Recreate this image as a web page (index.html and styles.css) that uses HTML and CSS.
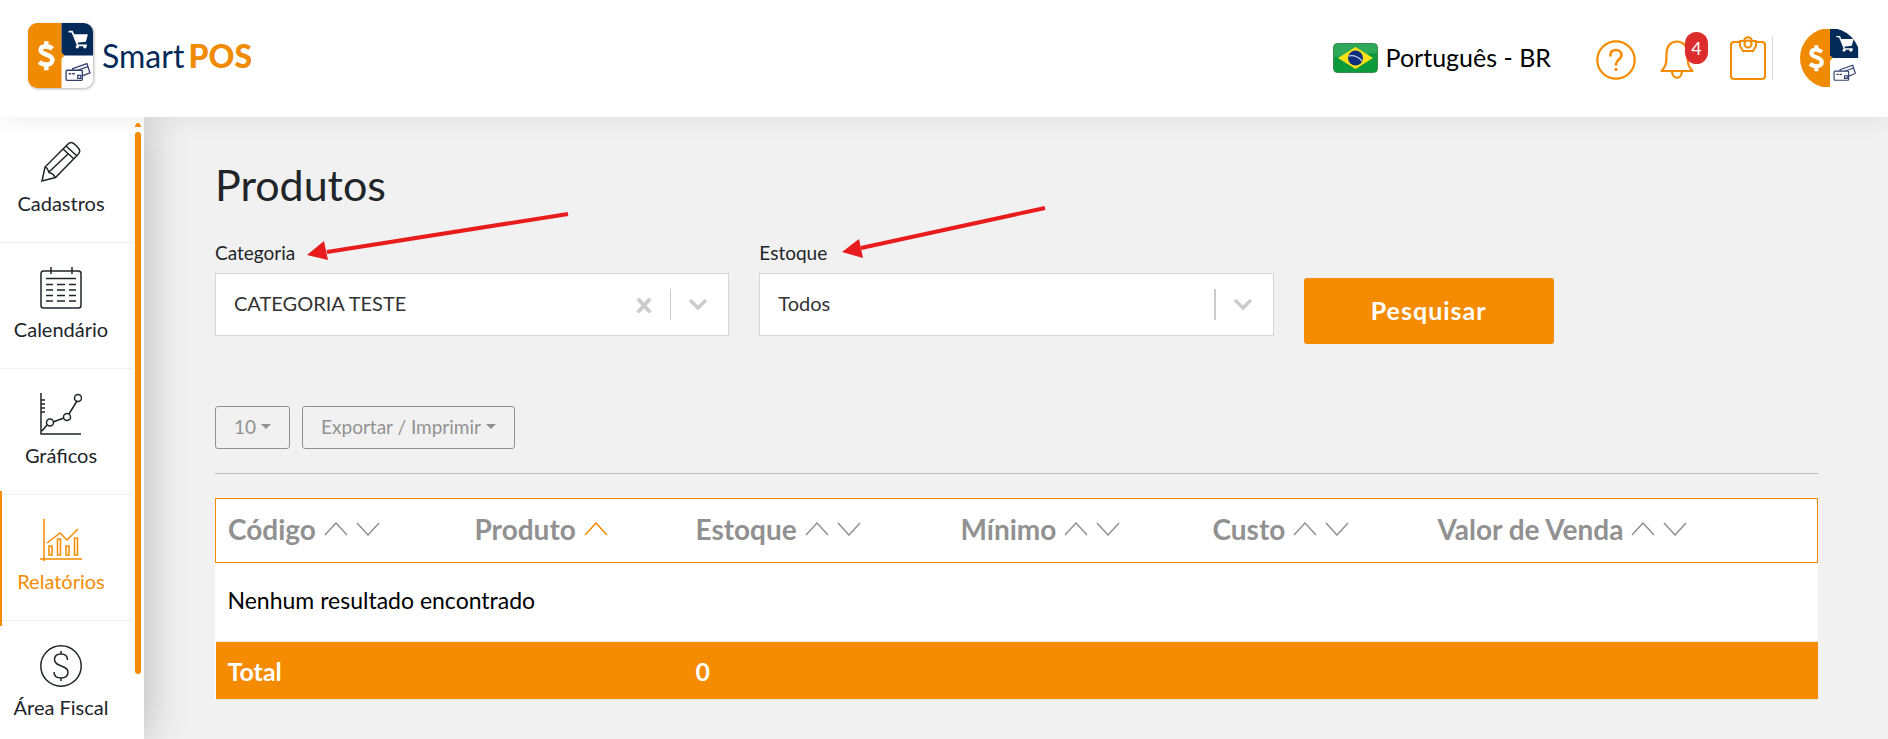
FILE: index.html
```html
<!DOCTYPE html>
<html lang="pt-BR">
<head>
<meta charset="utf-8">
<meta name="viewport" content="width=device-width, initial-scale=1">
<title>Smart POS - Produtos</title>
<link rel="stylesheet" href="styles.css">
</head>
<body>
<svg class="defs" width="0" height="0" aria-hidden="true">
  <symbol id="emblem" viewBox="0 0 64 64" overflow="visible">
    <rect width="64" height="64" fill="#fff"/>
    <path d="M0 0h33v29l3 3-3 3v29H0z" fill="#f08a00"/>
    <path d="M33 0h31v32H36l-3-3z" fill="#042a59"/>
    <path d="M24 25.500c-2-2-4-2.500-6.500-2.500-3.500 0-5 1.500-5 3.700 0 5.300 11.500 3.300 11.500 9.800 0 3-2.500 4.500-6 4.500-3 0-5-.8-7-2.500M18 18v5M18 41v5.500" fill="none" stroke="#fff" stroke-width="4.500"/>
    <path d="M40 8.500h3.500L49 22h9" fill="none" stroke="#fff" stroke-width="1.600"/>
    <path d="M45 11h14l-2 7.500-9 1z" fill="#fff"/>
    <circle cx="48.500" cy="23.500" r="1.600" fill="#fff"/><circle cx="56" cy="23.500" r="1.600" fill="#fff"/>
    <g fill="#fff" stroke="#33406e" stroke-width="1.300">
      <path d="M44 45l14-5 3 9-15 6z"/><path d="M45 48l14-5" fill="none"/>
      <rect x="37.500" y="46.500" width="16" height="10" rx="1"/><path d="M40 50h2.500M43.500 50h2.500M49 51.500h3v3h-3z" fill="none"/>
    </g>
  </symbol>
  <symbol id="up" viewBox="0 0 24 14"><path d="M1 13L12 1l11 12" fill="none" stroke="currentColor" stroke-width="1.500"/></symbol>
  <symbol id="down" viewBox="0 0 24 14"><path d="M1 1l11 12L23 1" fill="none" stroke="currentColor" stroke-width="1.500"/></symbol>
  <symbol id="chevron" viewBox="0 0 18 12"><path d="M2 2l7 7 7-7" fill="none" stroke="currentColor" stroke-width="3.500" stroke-linecap="round"/></symbol>
</svg>

<header class="topbar">
  <a class="brand" href="#">
    <svg class="brand-mark" viewBox="0 0 64 64" aria-hidden="true"><use href="#emblem" width="64" height="64"/></svg>
    <span class="brand-name">Smart <b>POS</b></span>
  </a>
  <div class="tools">
    <button class="language" type="button">
      <svg width="45" height="30" viewBox="0 0 45 30" aria-hidden="true">
        <rect x=".5" y=".5" width="44" height="29" rx="4" fill="#0a9a3c" stroke="#3c8a4c"/>
        <path d="M1 14V5a4 4 0 0 1 4-4h35a4 4 0 0 1 4 4v5z" fill="#fff" opacity=".15"/>
        <path d="M22.500 4L40 15 22.500 26 5 15z" fill="#fbe116"/>
        <circle cx="22.500" cy="15" r="7.500" fill="#0d2f7e"/>
        <path d="M15.500 13c5-1 10 1 13.500 5" fill="none" stroke="#c8d4e8" stroke-width="1.200"/>
      </svg>
      <span>Português - BR</span>
    </button>
    <button class="tool" type="button" aria-label="Ajuda">
      <svg width="40" height="40" viewBox="0 0 40 40" fill="none" stroke="currentColor" stroke-width="2.200"><circle cx="20" cy="20" r="18.700"/><path d="M14.500 16.500v-1.500c0-3.500 2.400-5 5.500-5s5.500 2 5.500 5c0 4.500-5.500 4.500-5.500 9.500v1M20 28v3" stroke-width="2.600"/></svg>
    </button>
    <button class="tool bell" type="button" aria-label="Notificações">
      <svg width="34" height="40" viewBox="0 0 34 40" fill="none" stroke="currentColor" stroke-width="2.200" stroke-linejoin="round"><path d="M1.500 31c4-4 5-7 5-17C6.500 6 11 1.500 17 1.500S27.500 6 27.500 14c0 10 1 13 5 17zM12 31c0 9 10 9 10 0"/></svg>
      <span class="badge">4</span>
    </button>
    <button class="tool clipboard" type="button" aria-label="Tarefas">
      <svg width="36" height="44" viewBox="0 0 36 44" fill="none" stroke="currentColor" stroke-width="2"><path d="M10 6H4a3 3 0 0 0-3 3v31a3 3 0 0 0 3 3h28a3 3 0 0 0 3-3V9a3 3 0 0 0-3-3h-6"/><path d="M10 5h4c1-5 7-5 8 0h4v5l-3 5H13l-3-5z"/><circle cx="18" cy="8" r="3.500"/></svg>
    </button>
    <button class="avatar" type="button" aria-label="Conta"><svg viewBox="0 -1 66 66" aria-hidden="true"><use href="#emblem" width="64" height="64"/></svg></button>
  </div>
</header>

<div class="shell">
  <nav class="sidebar" aria-label="Menu principal">
    <ul class="menu">
      <li><a href="#"><svg class="menu-icon" viewBox="0 0 42 42"><path d="M2 40l3-14L27.500 3.500c3-3 5-2.500 8 .5l2 2c3 3 3 5 0 8L15.500 36.500zM5 26c4 1 2.500 4 4 5.500 2 1 4 0 6 5M9 31l19-18M23 8l11 10M26 5l11 10"/></svg>Cadastros</a></li>
      <li><a href="#"><svg class="menu-icon" viewBox="0 0 42 42"><rect x="1" y="4" width="40" height="37" rx="2.500"/><path d="M11 0v7M32 0v7M6 11.500h30"/><path d="M6 17.500h7m4 0h8m4 0h7M6 23h7m4 0h8m4 0h7M6 28.500h7m4 0h8m4 0h7M6 34h7m4 0h8m4 0h7"/></svg>Calendário</a></li>
      <li><a href="#"><svg class="menu-icon" viewBox="0 0 42 42"><path d="M1 0v41h40M1 7h4M1 11h4M1 15h4M1 19h4M2 38l5-6M13 29l11-4M29 21l8-13"/><circle cx="10" cy="29.500" r="3.500"/><circle cx="27" cy="24" r="3.500"/><circle cx="38" cy="5" r="3.500"/></svg>Gráficos</a></li>
      <li class="active"><a href="#"><svg class="menu-icon" viewBox="0 0 42 42"><path d="M4 0v42M0 40h42M7 24l13-10 7 7 11-11M9 27h3v9H9zM17.500 20h3v16h-3zM26 27h3v9h-3zM34.500 19h3v17h-3z"/></svg>Relatórios</a></li>
      <li><a href="#"><svg class="menu-icon" viewBox="0 0 42 42"><circle cx="21" cy="21" r="20.200"/><path d="M27.500 15c0-4-2.700-6-6.500-6s-6.500 2-6.500 5.500c0 8 13.500 5 13.500 12.500 0 4-3 6-7 6s-7-2-7-6M21 6v3M21 33v3"/></svg>Área Fiscal</a></li>
    </ul>
    <div class="scroller" aria-hidden="true"><svg width="6" height="4" viewBox="0 0 6 4"><path d="M0 4V3l2-3h2l2 3v1z" fill="currentColor"/></svg><i class="scroller-thumb"></i></div>
  </nav>

  <main class="content">
    <h1>Produtos</h1>
    <form class="filters">
      <div class="field">
        <label for="categoria">Categoria</label>
        <svg class="pointer pointer-category" width="262" height="50" viewBox="0 0 262 50" aria-hidden="true"><path d="M20 41L261 3" stroke="#e81c1c" stroke-width="4"/><path d="M0 44l17-14 4 19z" fill="#e81c1c"/></svg>
        <div class="control">
          <select id="categoria"><option>CATEGORIA TESTE</option></select>
          <div class="indicators">
            <button class="clear" type="button" aria-label="Limpar"><svg width="16" height="18" viewBox="0 0 16 18"><path d="M3 4l10 11M13 4L3 15" stroke="currentColor" stroke-width="4" stroke-linecap="round"/></svg></button>
            <i class="separator"></i>
            <svg width="18" height="12"><use href="#chevron"/></svg>
          </div>
        </div>
      </div>
      <div class="field">
        <label for="estoque">Estoque</label>
        <svg class="pointer pointer-stock" width="204" height="54" viewBox="0 0 204 54" aria-hidden="true"><path d="M19 43L203 3" stroke="#e81c1c" stroke-width="4"/><path d="M0 47l17-13 4 19z" fill="#e81c1c"/></svg>
        <div class="control">
          <select id="estoque"><option>Todos</option></select>
          <div class="indicators"><i class="separator wide"></i><svg width="18" height="12"><use href="#chevron"/></svg></div>
        </div>
      </div>
      <button class="search" type="submit">Pesquisar</button>
    </form>

    <div class="actions">
      <button type="button">10<i class="caret"></i></button>
      <button type="button">Exportar / Imprimir<i class="caret"></i></button>
    </div>
    <hr>

    <table class="report">
      <colgroup><col class="c-code"><col class="c-product"><col class="c-stock"><col class="c-min"><col class="c-cost"><col class="c-price"></colgroup>
      <thead>
        <tr>
          <th>Código<svg class="sort"><use href="#up"/></svg><svg class="sort"><use href="#down"/></svg></th>
          <th>Produto<svg class="sort on"><use href="#up"/></svg></th>
          <th>Estoque<svg class="sort"><use href="#up"/></svg><svg class="sort"><use href="#down"/></svg></th>
          <th>Mínimo<svg class="sort"><use href="#up"/></svg><svg class="sort"><use href="#down"/></svg></th>
          <th>Custo<svg class="sort"><use href="#up"/></svg><svg class="sort"><use href="#down"/></svg></th>
          <th>Valor de Venda<svg class="sort"><use href="#up"/></svg><svg class="sort"><use href="#down"/></svg></th>
        </tr>
      </thead>
      <tbody><tr><td colspan="6">Nenhum resultado encontrado</td></tr></tbody>
      <tfoot><tr><td>Total</td><td></td><td>0</td><td></td><td></td><td></td></tr></tfoot>
    </table>
  </main>
</div>
</body>
</html>
```

FILE: styles.css
```css
:root {
  --orange: #f58b00;
  --ink: #212529;
  --muted: #919191;
}
* { box-sizing: border-box; }
body {
  margin: 0;
  height: 100vh;
  display: flex;
  flex-direction: column;
  overflow: hidden;
  background: #f1f1f1;
  color: var(--ink);
  font-family: Lato, "Open Sans", sans-serif;
}
button, select { font: inherit; }
button { padding: 0; border: 0; background: none; color: inherit; }
svg { display: block; flex: none; }
.defs { position: absolute; }

/* Top bar */
.topbar {
  position: relative;
  z-index: 2;
  flex: none;
  height: 117px;
  display: flex;
  justify-content: space-between;
  padding: 0 28px;
  background: #fff;
  box-shadow: 0 2px 24px rgba(0, 0, 0, .07);
}
.brand {
  display: flex;
  align-items: center;
  gap: 9px;
  padding-bottom: 6px;
  color: #042a59;
  text-decoration: none;
}
.brand-mark {
  width: 65px;
  height: 65px;
  border-radius: 9px;
  box-shadow: 1px 1px 3px rgba(0, 0, 0, .3);
}
.brand-name { font-size: 32px; }
.brand-name b { margin-left: -4px; color: #f08a00; font-weight: 900; }
.tools {
  display: flex;
  align-items: center;
  padding-bottom: 2px;
  color: var(--orange);
}
.language {
  display: flex;
  align-items: center;
  gap: 8px;
  margin-right: 45px;
  color: #000;
  font-size: 25px;
}
.language span { padding-bottom: 2px; }
.tool { position: relative; padding-top: 4px; }
.bell { margin-left: 24px; }
.badge {
  position: absolute;
  left: 25px;
  top: -4px;
  width: 23px;
  border-radius: 12px;
  background: #dc2c2c;
  color: #fff;
  font-size: 18px;
  line-height: 32px;
}
.clipboard {
  margin-left: 36px;
  padding: 0 6px 0 0;
  border-right: 1px solid #d5d5d5;
}
.avatar { width: 60px; height: 60px; margin-left: 27px; border-radius: 50%; overflow: hidden; }

/* Side menu */
.shell { flex: 1; min-height: 0; display: flex; }
.sidebar {
  flex: none;
  width: 144px;
  display: flex;
  gap: 2px;
  background: #fff;
  box-shadow: 2px 0 40px rgba(0, 0, 0, .24);
}
.menu { flex: 1; margin: 0; padding: 0; list-style: none; overflow: hidden; }
.menu li { position: relative; height: 126px; border-bottom: 1px solid #efefef; }
.menu a {
  display: flex;
  flex-direction: column;
  align-items: center;
  gap: 7px;
  padding-top: 24px;
  margin-right: 11px;
  color: var(--ink);
  font-size: 20px;
  line-height: 26px;
  text-decoration: none;
}
.menu-icon { width: 42px; height: 42px; fill: none; stroke: currentColor; stroke-width: 1.5px; }
.menu .active a { color: var(--orange); }
.menu .active::before {
  content: "";
  position: absolute;
  left: 0;
  top: -4px;
  width: 2px;
  height: 135px;
  background: var(--orange);
}
.scroller { width: 9px; padding-top: 6px; color: var(--orange); }
.scroller-thumb {
  display: block;
  width: 6px;
  height: 88%;
  margin-top: 5px;
  border-radius: 3px;
  background: var(--orange);
}

/* Page content */
.content { flex: 1; min-width: 0; padding: 40px 70px 0 71px; }
h1 { margin: 0; font-size: 43px; font-weight: 400; line-height: 56px; }
.filters {
  display: grid;
  grid-template-columns: repeat(3, 1fr);
  gap: 30px;
  margin-top: 28px;
}
.field { position: relative; }
.field label { display: block; font-size: 19px; line-height: 24px; }
.control { position: relative; margin-top: 8px; }
.control select {
  width: 100%;
  height: 63px;
  padding: 0 18px 4px;
  border: 1px solid #d4d4d4;
  border-radius: 0;
  appearance: none;
  background: #fff;
  color: #333;
  font-size: 20px;
}
.indicators {
  position: absolute;
  top: 16px;
  right: 22px;
  height: 31px;
  display: flex;
  align-items: center;
  gap: 18px;
  color: #ccc;
  pointer-events: none;
}
.separator { width: 1px; height: 31px; background: #ccc; }
.separator.wide { width: 2px; }
.pointer { position: absolute; z-index: 1; }
.pointer-category { left: 92px; top: -30px; }
.pointer-stock { left: 83px; top: -36px; }
.search {
  width: 250px;
  height: 66px;
  margin-top: 37px;
  padding-bottom: 2px;
  border-radius: 3px;
  background: var(--orange);
  color: #fff;
  font-size: 25px;
  font-weight: 700;
  letter-spacing: 1px;
}
.actions { display: flex; gap: 12px; margin-top: 62px; }
.actions button {
  display: flex;
  align-items: center;
  gap: 5px;
  height: 43px;
  padding: 0 18px 2px;
  border: 1px solid var(--muted);
  border-radius: 3px;
  color: var(--muted);
  font-size: 19px;
}
.caret { border: 5px solid transparent; border-top-color: currentColor; border-bottom: 0; }
hr { margin: 24px 0; border: 0; border-top: 1px solid #bababa; }

/* Report table */
.report {
  width: 100%;
  table-layout: fixed;
  border-collapse: collapse;
  background: #fff;
}
.c-code { width: 247px; }
.c-product { width: 221px; }
.c-stock { width: 265px; }
.c-min { width: 252px; }
.c-cost { width: 225px; }
.report th, .report td { padding: 0 12px; text-align: left; }
.report thead tr { height: 64px; border: 1px solid var(--orange); }
.report th {
  padding-bottom: 4px;
  color: var(--muted);
  font-size: 28px;
  font-weight: 700;
  white-space: nowrap;
}
.sort { display: inline-block; width: 24px; height: 14px; margin-left: 8px; vertical-align: 4px; }
.sort.on { color: var(--orange); }
.report tbody td { height: 79px; padding-bottom: 4px; color: #000; font-size: 23px; }
.report tfoot tr { border-top: 1px solid #e9ecef; border-bottom: 1px solid #e3e6ea; }
.report tfoot td {
  height: 58px;
  background: var(--orange);
  color: #fff;
  font-size: 25px;
  font-weight: 700;
}
```
